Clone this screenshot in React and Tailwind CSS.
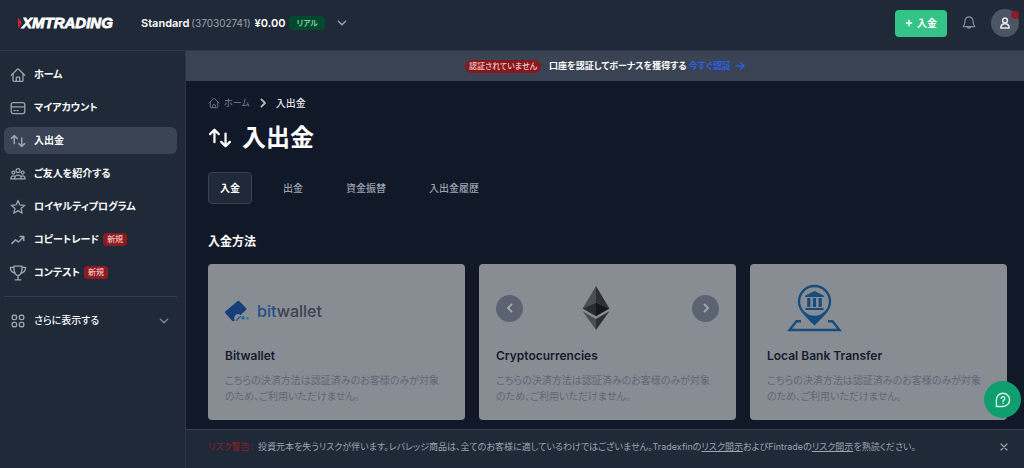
import React, { useState } from 'react';

const HomeIcon = ({ className }) => (
  <svg className={className} viewBox="0 0 16 16" fill="none" stroke="currentColor" strokeWidth="1.3" strokeLinecap="round" strokeLinejoin="round" aria-hidden="true">
    <path d="M1.3 8.2 7.3 2.2a1 1 0 0 1 1.4 0l6 6" />
    <path d="M3 6.8v6.6a.9.9 0 0 0 .9.9h8.2a.9.9 0 0 0 .9-.9V6.8" />
    <path d="M6.3 14.2v-3.4a.6.6 0 0 1 .6-.6h2.2a.6.6 0 0 1 .6.6v3.4" />
  </svg>
);

const CardIcon = ({ className }) => (
  <svg className={className} viewBox="0 0 16 16" fill="none" stroke="currentColor" strokeWidth="1.3" strokeLinecap="round" aria-hidden="true">
    <rect x="1.2" y="2.6" width="13.6" height="11" rx="2" />
    <path d="M1.4 6.8h13.2M4 10.6h1.2M7 10.6h1.2" />
  </svg>
);

const TransferIcon = ({ className }) => (
  <svg className={className} viewBox="0 0 16 16" fill="none" stroke="currentColor" strokeWidth="1.5" strokeLinecap="round" strokeLinejoin="round" aria-hidden="true">
    <path d="M4.3 10.8V2.6M1.4 5.4l2.9-2.9 2.9 2.9" />
    <path d="M11.7 5v8.4M8.8 10.6l2.9 2.9 2.9-2.9" />
  </svg>
);

const FriendsIcon = ({ className }) => (
  <svg className={className} viewBox="0 0 18 16" fill="none" stroke="currentColor" strokeWidth="1.4" strokeLinecap="round" strokeLinejoin="round" aria-hidden="true">
    <circle cx="9" cy="4.2" r="2.2" />
    <circle cx="3.8" cy="6.4" r="1.7" />
    <circle cx="14.2" cy="6.4" r="1.7" />
    <path d="M5.2 13.6c0-2.6 1.5-4.4 3.8-4.4s3.8 1.8 3.8 4.4z" />
    <path d="M5.2 13.6H1c0-2.2 1-3.4 2.8-3.4.7 0 1.2.2 1.7.5M12.8 13.6H17c0-2.2-1-3.4-2.8-3.4-.7 0-1.2.2-1.7.5" />
  </svg>
);

const StarIcon = ({ className }) => (
  <svg className={className} viewBox="0 0 16 16" fill="none" stroke="currentColor" strokeWidth="1.3" strokeLinejoin="round" aria-hidden="true">
    <path d="m8 1.4 1.9 4.5 4.8.4-3.7 3.1 1.2 4.8L8 11.6l-4.2 2.6L5 9.4 1.3 6.3l4.8-.4z" />
  </svg>
);

const TrendIcon = ({ className }) => (
  <svg className={className} viewBox="0 0 16 16" fill="none" stroke="currentColor" strokeWidth="1.5" strokeLinecap="round" strokeLinejoin="round" aria-hidden="true">
    <path d="m2 11.4 3.6-3.6 2.8 2.2 5-5M10 4.6h3.8v3.8" />
  </svg>
);

const TrophyIcon = ({ className }) => (
  <svg className={className} viewBox="0 0 20 18" fill="none" stroke="currentColor" strokeWidth="1.5" strokeLinecap="round" strokeLinejoin="round" aria-hidden="true">
    <path d="M5.4 1.4h9.2c0 5.6-1 10.2-4.6 10.2S5.4 7 5.4 1.4z" />
    <path d="M5.4 2.8H1.6c0 3.6 1.6 5.6 5 6.2M14.6 2.8h3.8c0 3.6-1.6 5.6-5 6.2M10 11.6v4.8M6.8 16.6h6.4" />
  </svg>
);

const GridIcon = ({ className }) => (
  <svg className={className} viewBox="0 0 16 16" fill="none" stroke="currentColor" strokeWidth="1.4" aria-hidden="true">
    <rect x="2.2" y="2.2" width="4.4" height="4.4" rx="1.6" />
    <rect x="9.4" y="2.2" width="4.4" height="4.4" rx="1.6" />
    <rect x="2.2" y="9.4" width="4.4" height="4.4" rx="1.6" />
    <rect x="9.4" y="9.4" width="4.4" height="4.4" rx="1.6" />
  </svg>
);

const Chevron = ({ className }) => (
  <svg className={className} viewBox="0 0 10 10" fill="none" stroke="currentColor" strokeWidth="1.4" strokeLinecap="round" strokeLinejoin="round" aria-hidden="true">
    <path d="m1.4 3.2 3.6 3.6 3.6-3.6" />
  </svg>
);

const ChevronSide = ({ className, left }) => (
  <svg className={className} viewBox="0 0 10 10" fill="none" stroke="currentColor" strokeWidth="1.8" strokeLinecap="round" strokeLinejoin="round" aria-hidden="true">
    <path d={left ? 'M6.6 1.4 3 5l3.6 3.6' : 'M3.4 1.4 7 5 3.4 8.6'} />
  </svg>
);

const BitwalletLogo = () => (
  <div className="flex items-center gap-2 pt-1.5 text-base font-medium text-[#3b4250]">
    <svg className="h-6 w-6" viewBox="0 0 24 24" aria-hidden="true">
      <path d="M12.400 2.300a1.500 1.500 0 0 1 2 0l6.600 6.600a1.400 1.400 0 0 1 0 2l-5.400 5a4 4 0 0 0-6.200 4.400l.3 1-.5.400a1.500 1.500 0 0 1-2 0L.5 14.400a1.500 1.500 0 0 1 0-2.200z" fill="#163f7a" />
      <path d="M10.600 21.400c2.300.2 2.600-3 5.400-4.200" fill="none" stroke="#1d5a94" strokeWidth="1.300" />
      <circle cx="18" cy="18.900" r="1.800" fill="#22709c" />
      <circle cx="22.600" cy="19.300" r="1.200" fill="#23808f" />
    </svg>
    <span>
      <span className="text-[#234f86]">bit</span>wallet
    </span>
  </div>
);

const EthereumLogo = () => (
  <svg className="mr-6 h-11 w-7" viewBox="0 0 28 44" role="img" aria-label="Ethereum">
    <path d="M14 0 .6 22.400 14 16.400z" fill="#4b4e55" />
    <path d="m14 0 13.400 22.400L14 16.400z" fill="#2c2f36" />
    <path d="M14 16.400.6 22.400 14 30.200z" fill="#2a2c33" />
    <path d="m14 16.400 13.400 6L14 30.200z" fill="#15171d" />
    <path d="M.6 25.200 14 33v11z" fill="#4b4e55" />
    <path d="M27.400 25.200 14 33v11z" fill="#2c2f36" />
  </svg>
);

const BankLogo = () => (
  <svg className="ml-5 h-12 w-14" viewBox="0 0 56 48" role="img" aria-label="Local bank">
    <path d="M10.800 17.500a16.700 16.700 0 1 1 33.400 0c0 8-5.700 13-16.700 24-11-11-16.700-16-16.700-24z" fill="#154d7e" />
    <circle cx="27.500" cy="17.500" r="14.300" fill="#888d94" />
    <path d="m27.500 7 9.500 4.800V13H18v-1.200z" fill="#154d7e" />
    <path d="M20.200 14h3.200v9h-3.200zM25.900 14h3.200v9h-3.200zM31.600 14h3.200v9h-3.200zM18.500 24h18v2h-18z" fill="#154d7e" />
    <path d="M14 37.200H9.500L2.500 46h50l-7-8.800H41" fill="none" stroke="#154d7e" strokeWidth="2.400" />
  </svg>
);

const menu = [
  { name: 'ホーム', icon: HomeIcon },
  { name: 'マイアカウント', icon: CardIcon },
  { name: '入出金', icon: TransferIcon, active: true },
  { name: 'ご友人を紹介する', icon: FriendsIcon },
  { name: 'ロイヤルティプログラム', icon: StarIcon },
  { name: 'コピートレード', icon: TrendIcon, isNew: true },
  { name: 'コンテスト', icon: TrophyIcon, isNew: true, wide: true },
];

const tabs = ['入金', '出金', '資金振替', '入出金履歴'];

const methods = [
  { name: 'Bitwallet', logo: BitwalletLogo },
  { name: 'Cryptocurrencies', logo: EthereumLogo, slider: true },
  { name: 'Local Bank Transfer', logo: BankLogo },
];

const Header = () => (
  <header className="flex h-[51px] shrink-0 items-center border-b border-[#2d3747] bg-[#1f2937] pb-1 pr-[5px] pl-[18px]">
    <a href="#" className="flex w-[123px] items-center">
      <svg className="h-3 w-1" viewBox="0 0 4 12" aria-hidden="true">
        <path d="M0 .5 4 5 2.500 8 0 11.500z" fill="#d3202f" />
      </svg>
      <span className="font-['Liberation_Sans',sans-serif] text-[15px] leading-4 font-bold text-white italic [-webkit-text-stroke:0.8px_white]">XMTRADING</span>
    </a>
    <button className="flex items-center text-[11px] text-white">
      <span className="font-semibold">Standard</span>
      <span className="ml-0.5 text-[10px] text-[#9aa2af]">(370302741)</span>
      <span className="ml-1 font-semibold">¥0.00</span>
      <span className="ml-1 rounded bg-[#04492f] px-[7px] text-[8px] leading-[14px] font-medium text-[#8ce0b5]">リアル</span>
      <Chevron className="ml-3 h-2.5 w-2.5 text-[#9ca3af]" />
    </button>
    <div className="ml-auto flex items-center">
      <button className="flex h-[27px] items-center gap-1 rounded bg-[#34c388] px-2.5 text-[10px] font-bold text-white">
        <svg className="h-2 w-2" viewBox="0 0 8 8" stroke="currentColor" strokeWidth="1.400" aria-hidden="true">
          <path d="M4 .8v6.400M.8 4h6.400" />
        </svg>
        入金
      </button>
      <button aria-label="通知" className="ml-3.5 text-[#858d9b]">
        <svg className="h-4 w-4" viewBox="0 0 16 16" fill="none" stroke="currentColor" strokeWidth="1.200" strokeLinecap="round" strokeLinejoin="round" aria-hidden="true">
          <path d="M8 1.800a4 4 0 0 0-4 4c0 3.400-.8 4.600-1.800 5.900h11.600c-1-1.300-1.800-2.500-1.800-5.900a4 4 0 0 0-4-4zM6.300 12a1.800 1.800 0 0 0 3.400 0" />
        </svg>
      </button>
      <button aria-label="プロフィール" className="relative ml-3.5 flex h-7 w-7 items-center justify-center rounded-full bg-[#4b5563] text-gray-200">
        <svg className="h-3.5 w-3.5" viewBox="0 0 16 16" fill="none" stroke="currentColor" strokeWidth="1.800" strokeLinejoin="round" aria-hidden="true">
          <circle cx="8" cy="5" r="2.700" />
          <path d="M3.200 13.800c0-3 1.900-5 4.800-5s4.800 2 4.800 5z" />
        </svg>
        <span className="absolute top-0.5 right-0 h-2 w-2 rounded-full bg-[#8f1c22]"></span>
      </button>
    </div>
  </header>
);

const Sidebar = () => (
  <aside className="w-[186px] shrink-0 border-r border-[#2d3747] bg-[#1f2937] pt-2.5 pr-2 pl-1">
    <nav className="flex flex-col gap-1.5">
      {menu.map(({ name, icon: Icon, active, isNew, wide }) => (
        <a
          key={name}
          href="#"
          className={`flex h-[27px] items-center rounded-md px-1.5 text-[10px] font-semibold text-white ${active ? 'bg-[#3a4353]' : ''}`}
        >
          <span className="mr-2 flex w-4 items-center justify-center text-[#9ca3af]">
            <Icon className={wide ? 'h-[18px] w-[18px] shrink-0' : 'h-4 w-4'} />
          </span>
          {name}
          {isNew && (
            <span className="ml-1 rounded bg-[#8b1c20] px-1 text-[8px] leading-[13px] font-medium text-[#f3b9b9]">新規</span>
          )}
        </a>
      ))}
    </nav>
    <hr className="mt-2.5 border-[#323c4c]" />
    <button className="mt-2.5 flex h-[27px] w-full items-center px-1.5 text-[10px] font-medium text-gray-100">
      <span className="mr-2 flex w-4 items-center justify-center text-[#9ca3af]">
        <GridIcon className="h-4 w-4" />
      </span>
      さらに表示する
      <Chevron className="mr-0.5 ml-auto h-2.5 w-2.5 text-[#7f8794]" />
    </button>
  </aside>
);

const MethodCard = ({ name, logo: Logo, slider }) => (
  <article className="rounded bg-[#888d94] px-[17px] pt-[18px] pb-4">
    <div className={`flex h-[52px] items-center ${slider ? 'justify-between' : ''}`}>
      {slider && (
        <button aria-label="前へ" className="flex h-[27px] w-[27px] items-center justify-center rounded-full bg-[#5b6372] text-[#a5a9b0]">
          <ChevronSide left className="h-2.5 w-2.5" />
        </button>
      )}
      <Logo />
      {slider && (
        <button aria-label="次へ" className="flex h-[27px] w-[27px] items-center justify-center rounded-full bg-[#5b6372] text-[#a5a9b0]">
          <ChevronSide className="h-2.5 w-2.5" />
        </button>
      )}
    </div>
    <h3 className="mt-3.5 text-[12px] leading-4 font-semibold text-[#141c2c]">{name}</h3>
    <p className="mt-2 text-[10px] leading-4 text-[#5f6775]">
      こちらの決済方法は認証済みのお客様のみが対象のため、ご利用いただけません。
    </p>
  </article>
);

const App = () => {
  const [tab, setTab] = useState(tabs[0]);
  const [showRisk, setShowRisk] = useState(true);

  return (
    <div lang="ja" className="flex h-screen flex-col overflow-hidden bg-[#111827] font-['Inter','Noto_Sans_CJK_JP',sans-serif] [font-feature-settings:'palt']">
      <Header />
      <div className="flex min-h-0 flex-1">
        <Sidebar />
        <div className="relative flex min-w-0 flex-1 flex-col">
          {/* Verification banner */}
          <div className="flex h-[30px] shrink-0 items-center justify-center bg-[#3a4353] text-[9px] font-semibold text-white">
            <span className="mr-2 rounded-full bg-[#85191d] px-1 text-[8px] leading-[13px] font-medium text-[#f0c4c4]">認証されていません</span>
            口座を認証してボーナスを獲得する
            <a href="#" className="ml-0.5 flex items-center gap-1 text-[#2b5fe0]">
              今すぐ認証
              <svg className="h-2.5 w-2.5" viewBox="0 0 10 10" fill="none" stroke="currentColor" strokeWidth="1.400" strokeLinecap="round" strokeLinejoin="round" aria-hidden="true">
                <path d="M.8 5h8.200M5.600 1.800 9 5 5.600 8.200" />
              </svg>
            </a>
          </div>

          <main className="min-h-0 flex-1 overflow-hidden pt-3.5 pr-[17px] pl-[22px]">
            <div className="flex items-center text-[10px] leading-4">
              <HomeIcon className="h-3 w-3 text-[#6b7280]" />
              <a href="#" className="ml-1 text-[9px] text-[#7b8391]">ホーム</a>
              <ChevronSide className="mx-2 h-2.5 w-2.5 text-[#b4bac4]" />
              <span className="font-medium text-[#e5e7eb]">入出金</span>
            </div>

            <h1 className="mt-[11px] flex items-center gap-2.5 text-2xl font-bold text-white">
              <TransferIcon className="h-6 w-6" />
              入出金
            </h1>

            <div className="mt-[18px] flex gap-[19px] text-[10px] font-medium">
              {tabs.map((t) => (
                <button
                  key={t}
                  onClick={() => setTab(t)}
                  className={`h-8 rounded border px-[11px] ${t === tab ? 'border-[#374151] bg-[#1f2937] font-bold text-white' : 'border-transparent text-[#9ca3af]'}`}
                >
                  {t}
                </button>
              ))}
            </div>

            <h2 className="mt-7 text-[12px] leading-5 font-bold text-white">入金方法</h2>
            <div className="mt-3 grid grid-cols-3 gap-3.5">
              {methods.map((method) => (
                <MethodCard key={method.name} {...method} />
              ))}
            </div>
          </main>

          {/* Help button */}
          <button aria-label="ヘルプ" className="absolute right-[3px] bottom-[50px] flex h-[37px] w-[37px] items-center justify-center rounded-full bg-[#0f9f6e] text-[#d5f2e6]">
            <svg className="h-4 w-4" viewBox="0 0 16 16" fill="none" stroke="currentColor" strokeWidth="1.400" strokeLinecap="round" strokeLinejoin="round" aria-hidden="true">
              <path d="M1.400 14.500V8A6.600 6.600 0 1 1 8 14.500z" />
              <path d="M6.200 6.400a1.800 1.800 0 1 1 2.700 1.600c-.6.300-.9.700-.9 1.300M8 11.300v.1" />
            </svg>
          </button>

          {/* Risk warning */}
          {showRisk && (
            <footer className="flex h-[39px] shrink-0 items-center border-t border-[#374151] bg-[#1f2937] pr-4 pb-1 pl-[22px] text-[9px] text-[#9ca3af]">
              <p>
                <span className="mr-1 text-[#8f1f24]">リスク警告：</span>
                投資元本を失うリスクが伴います。レバレッジ商品は、全てのお客様に適しているわけではございません。Tradexfinの
                <a href="#" className="underline">リスク開示</a>およびFintradeの
                <a href="#" className="underline">リスク開示</a>を熟読ください。
              </p>
              <button aria-label="閉じる" onClick={() => setShowRisk(false)} className="ml-auto">
                <svg className="h-2 w-2" viewBox="0 0 8 8" stroke="currentColor" strokeWidth="1.200" strokeLinecap="round" aria-hidden="true">
                  <path d="m1 1 6 6M7 1 1 7" />
                </svg>
              </button>
            </footer>
          )}
        </div>
      </div>
    </div>
  );
};

export default App;
